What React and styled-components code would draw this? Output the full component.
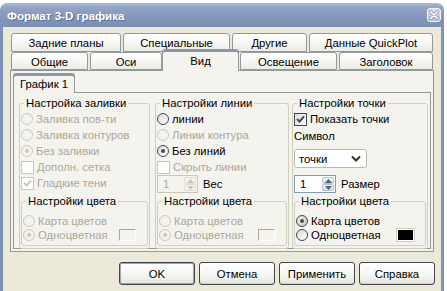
import React from 'react';
import styled, { createGlobalStyle } from 'styled-components';

const GlobalStyle = createGlobalStyle`
  html, body { margin: 0; padding: 0; background: #ffffff; }
  body {
    font-family: "Liberation Sans", Arial, sans-serif;
    font-size: 11.3px;
    color: #000;
    overflow: hidden;
  }
  * { box-sizing: border-box; }
`;

const Window = styled.div`
  width: 444px;
  margin-top: 3px;
  display: flex;
  flex-direction: column;
`;

const TitleBar = styled.div`
  height: 24px;
  border-radius: 7px 7px 0 0;
  background: linear-gradient(#aebcd6 0%, #93a5c6 18%, #8598bd 55%, #7b90b7 100%);
  display: flex;
  align-items: center;
  justify-content: space-between;
  padding: 0 3px 0 7px;
`;

const Title = styled.span`
  color: #ffffff;
  font-weight: bold;
  font-size: 11.6px;
  text-shadow: 1px 1px 0 #5b6c8e;
`;

const CloseButton = styled.div`
  width: 14px;
  height: 14px;
  border: 1px solid #f2f4f8;
  border-radius: 3px;
  background: linear-gradient(#dfe4ee, #b3bdd0);
  display: flex;
  align-items: center;
  justify-content: center;
`;

const Frame = styled.div`
  background: #ece9d8;
  border: 3px solid #7e92b7;
  border-top: none;
  height: 270px;
  display: flex;
  flex-direction: column;
  padding-top: 6px;
`;

const TabStrip = styled.div`
  margin: 0 8px;
  display: flex;
  flex-direction: column;
`;

const TabRow = styled.div`
  display: flex;
  align-items: flex-end;
  height: ${p => p.$h}px;
`;

const Tab = styled.div`
  position: relative;
  width: ${p => p.$w}px;
  margin-left: ${p => p.$ml || 0}px;
  height: ${p => (p.$active ? 22 : p.$h)}px;
  margin-bottom: ${p => (p.$active ? -1 : 0)}px;
  z-index: ${p => (p.$active ? 2 : 1)};
  border: 1px solid #919b9c;
  border-bottom: ${p => (p.$active ? 'none' : '1px solid #919b9c')};
  border-radius: 3px 3px 0 0;
  background: ${p =>
    p.$active ? '#f4f3ee' : 'linear-gradient(#fefefe 0%, #f7f7f4 50%, #ebeae3 100%)'};
  box-shadow: ${p => (p.$active ? 'inset 0 2px 0 #8a95aa' : 'none')};
  display: flex;
  justify-content: center;
  align-items: center;
  padding-top: ${p => (p.$active ? 0 : 1)}px;
  white-space: nowrap;
`;

const Page = styled.div`
  margin: 0 7px;
  height: 182px;
  border: 1px solid #919b9c;
  background: #f4f3ee;
  padding: 2px 2px 0 2px;
  display: flex;
  flex-direction: column;
`;

const InnerTab = styled.div`
  position: relative;
  z-index: 2;
  width: 62px;
  height: 20px;
  margin-bottom: -1px;
  border: 1px solid #919b9c;
  border-bottom: none;
  border-radius: 3px 3px 0 0;
  background: #f4f3ee;
  box-shadow: inset 0 2px 0 #8a95aa;
  display: flex;
  align-items: center;
  justify-content: center;
  padding-top: 1px;
`;

const InnerPanel = styled.div`
  height: 157px;
  border: 1px solid #919b9c;
  background: #f4f3ee;
  display: flex;
  align-items: flex-start;
  padding-top: 3px;
`;

const GroupBox = styled.fieldset`
  margin: ${p => (p.$inner ? 'auto 0 1px 0' : `0 0 0 ${p.$ml || 0}px`)};
  padding: ${p => (p.$inner ? '6px 1px 3px 1px' : '1px 1px 1px 1px')};
  min-width: 0;
  width: ${p => (p.$w ? `${p.$w}px` : 'auto')};
  height: ${p => p.$h}px;
  border: 1px solid #d0d0bf;
  border-radius: 3px;
  display: flex;
  flex-direction: column;
`;

const Legend = styled.legend`
  padding: 0 2px;
  margin-left: 3px;
  line-height: 14px;
  color: #000;
`;

const Row = styled.div`
  display: flex;
  align-items: center;
  height: ${p => p.$h || 16}px;
  margin-top: ${p => p.$mt || 0}px;
  gap: ${p => p.$gap || 3}px;
  color: ${p => (p.$disabled ? '#aca899' : '#000')};
  white-space: nowrap;
`;

const RadioCircle = styled.span`
  width: 12px;
  height: 12px;
  flex: none;
  border-radius: 50%;
  border: 1px solid ${p => (p.$disabled ? '#cac8bb' : '#3b4a5e')};
  background: ${p =>
    p.$disabled
      ? '#f4f3ee'
      : p.$pressed
      ? 'radial-gradient(circle at 40% 40%, #f0f0ee, #c4c3bd)'
      : 'linear-gradient(135deg, #dcdcd6, #ffffff)'};
  display: flex;
  align-items: center;
  justify-content: center;
  &::after {
    content: '';
    width: 4px;
    height: 4px;
    border-radius: 50%;
    display: ${p => (p.$checked ? 'block' : 'none')};
    background: ${p => (p.$disabled ? '#cac8bb' : '#4b4b4b')};
  }
`;

const CheckBox = styled.span`
  width: 13px;
  height: 13px;
  flex: none;
  border: 1px solid ${p => (p.$disabled ? '#cac8bb' : '#3b4a5e')};
  background: ${p => (p.$disabled ? '#ffffff' : 'linear-gradient(135deg, #dcdcd6, #ffffff)')};
  display: flex;
  align-items: center;
  justify-content: center;
`;

const Swatch = styled.span`
  margin-left: auto;
  margin-right: 10px;
  width: 17px;
  height: 12px;
  border: 1px solid ${p => (p.$dark ? '#ffffff' : '#aca899')};
  border-right-color: #ffffff;
  border-bottom-color: #ffffff;
  background: ${p => (p.$dark ? '#000000' : '#f4f3ee')};
  outline: ${p => (p.$dark ? '1px solid #d0d0bf' : 'none')};
`;

const Spin = styled.div`
  width: ${p => p.$w}px;
  height: 18px;
  flex: none;
  display: flex;
  border: 1px solid ${p => (p.$disabled ? '#c9c7ba' : '#7f9db9')};
  background: ${p => (p.$disabled ? '#f4f3ee' : '#ffffff')};
  color: ${p => (p.$disabled ? '#aca899' : '#000')};
`;

const SpinValue = styled.span`
  flex: 1;
  padding-left: 5px;
  display: flex;
  align-items: center;
`;

const SpinButtons = styled.div`
  width: 13px;
  display: flex;
  flex-direction: column;
  padding: 1px 1px 1px 0;
`;

const SpinButton = styled.span`
  flex: 1;
  border: 1px solid ${p => (p.$disabled ? '#e2e0d5' : '#b7c0cc')};
  border-radius: 2px;
  background: ${p => (p.$disabled ? '#f4f3ee' : 'linear-gradient(#f4f6f9, #d6dbe3)')};
  display: flex;
  align-items: center;
  justify-content: center;
`;

const Label = styled.span`
  color: ${p => (p.$disabled ? '#aca899' : '#000')};
`;

const Select = styled.div`
  margin-top: 5px;
  width: 73px;
  height: 19px;
  border: 1px solid #b9b8b1;
  border-radius: 3px;
  background: #ffffff;
  display: flex;
  align-items: center;
  justify-content: space-between;
  padding: 0 5px 0 4px;
`;

const ButtonBar = styled.div`
  display: flex;
  justify-content: flex-end;
  gap: 4px;
  margin: 10px 6px 0 0;
`;

const Button = styled.div`
  width: 76px;
  height: 23px;
  border: 1px solid #3f4650;
  border-radius: 3px;
  background: linear-gradient(#ffffff 0%, #f5f5f2 60%, #e3e2da 100%);
  box-shadow: ${p => (p.$default ? 'inset 0 0 0 1px #9ea6b5' : 'inset 0 -1px 0 #d6d0c5')};
  display: flex;
  align-items: center;
  justify-content: center;
`;

const Arrow = ({ up, color }) => (
  <svg width="7" height="4" viewBox="0 0 7 4">
    <path d={up ? 'M0 4 L3.5 0 L7 4 Z' : 'M0 0 L3.5 4 L7 0 Z'} fill={color} />
  </svg>
);

const Check = ({ color }) => (
  <svg width="9" height="9" viewBox="0 0 9 9">
    <path d="M1 4 L3.5 6.5 L8 1.5" stroke={color} strokeWidth="2" fill="none" />
  </svg>
);

const Radio = ({ label, checked, disabled, pressed }) => (
  <Row $disabled={disabled}>
    <RadioCircle $checked={checked} $disabled={disabled} $pressed={pressed} />
    <span>{label}</span>
  </Row>
);

const Radio14 = ({ label, checked, disabled, pressed, swatch }) => (
  <Row $h={14} $disabled={disabled}>
    <RadioCircle $checked={checked} $disabled={disabled} $pressed={pressed} />
    <span>{label}</span>
    {swatch}
  </Row>
);

const Check16 = ({ label, checked, disabled }) => (
  <Row $disabled={disabled}>
    <CheckBox $disabled={disabled}>
      {checked && <Check color={disabled ? '#cac8bb' : '#4a4a4a'} />}
    </CheckBox>
    <span>{label}</span>
  </Row>
);

const SpinBox = ({ w, disabled, label, mt }) => (
  <Row $h={18} $gap={5} $mt={mt}>
    <Spin $w={w} $disabled={disabled}>
      <SpinValue>1</SpinValue>
      <SpinButtons>
        <SpinButton $disabled={disabled}><Arrow up color={disabled ? '#cac8bb' : '#4d6185'} /></SpinButton>
        <SpinButton $disabled={disabled}><Arrow color={disabled ? '#cac8bb' : '#4d6185'} /></SpinButton>
      </SpinButtons>
    </Spin>
    <Label>{label}</Label>
  </Row>
);

const ColorGroup = ({ disabled, mapChecked, dark }) => (
  <GroupBox $inner $h={52}>
    <Legend>Настройки цвета</Legend>
    <Radio14 label="Карта цветов" disabled={disabled} checked={mapChecked} pressed={!disabled && mapChecked} />
    <Radio14 label="Одноцветная" disabled={disabled} checked={disabled} swatch={<Swatch $dark={dark} />} />
  </GroupBox>
);

const row1 = [
  { t: 'Задние планы', w: 110, ml: 0 },
  { t: 'Специальные', w: 107, ml: 2 },
  { t: 'Другие', w: 75, ml: 2 },
  { t: 'Данные QuickPlot', w: 124, ml: 2 },
];
const row2 = [
  { t: 'Общие', w: 77, ml: 0 },
  { t: 'Оси', w: 72, ml: 2 },
  { t: 'Вид', w: 77, ml: 0, active: true },
  { t: 'Освещение', w: 97, ml: 1 },
  { t: 'Заголовок', w: 94, ml: 2 },
];

export default function App() {
  return (
    <>
      <GlobalStyle />
      <Window>
        <TitleBar>
          <Title>Формат 3-D графика</Title>
          <CloseButton>
            <svg width="10" height="10" viewBox="0 0 10 10">
              <path d="M1.5 1.5 L8.5 8.5 M8.5 1.5 L1.5 8.5" stroke="#8f9ab0" strokeWidth="3.2" strokeLinecap="round" />
              <path d="M1.5 1.5 L8.5 8.5 M8.5 1.5 L1.5 8.5" stroke="#ffffff" strokeWidth="1.6" strokeLinecap="round" />
            </svg>
          </CloseButton>
        </TitleBar>
        <Frame>
          <TabStrip>
            <TabRow $h={19}>
              {row1.map(t => (
                <Tab key={t.t} $w={t.w} $ml={t.ml} $h={19}>{t.t}</Tab>
              ))}
            </TabRow>
            <TabRow $h={18}>
              {row2.map(t => (
                <Tab key={t.t} $w={t.w} $ml={t.ml} $h={18} $active={t.active}>{t.t}</Tab>
              ))}
            </TabRow>
          </TabStrip>
          <Page>
            <InnerTab>График 1</InnerTab>
            <InnerPanel>
              <GroupBox $ml={5} $w={131} $h={153}>
                <Legend>Настройка заливки</Legend>
                <Radio label="Заливка пов-ти" disabled />
                <Radio label="Заливка контуров" disabled />
                <Radio label="Без заливки" disabled checked />
                <Check16 label="Дополн. сетка" disabled />
                <Check16 label="Гладкие тени" disabled checked />
                <ColorGroup disabled />
              </GroupBox>
              <GroupBox $ml={5} $w={134} $h={153}>
                <Legend>Настройки линии</Legend>
                <Radio label="линии" />
                <Radio label="Линии контура" disabled />
                <Radio label="Без линий" checked />
                <Check16 label="Скрыть линии" disabled />
                <SpinBox w={41} disabled label="Вес" />
                <ColorGroup disabled />
              </GroupBox>
              <GroupBox $ml={3} $w={136} $h={153}>
                <Legend>Настройки точки</Legend>
                <Check16 label="Показать точки" checked />
                <Row $mt={1}>Символ</Row>
                <Select>
                  <span>точки</span>
                  <svg width="10" height="7" viewBox="0 0 10 7">
                    <path d="M1 1.5 L5 5.5 L9 1.5" stroke="#333" strokeWidth="2" fill="none" />
                  </svg>
                </Select>
                <SpinBox w={42} label="Размер" mt={7} />
                <ColorGroup mapChecked dark />
              </GroupBox>
            </InnerPanel>
          </Page>
          <ButtonBar>
            <Button $default>OK</Button>
            <Button>Отмена</Button>
            <Button>Применить</Button>
            <Button>Справка</Button>
          </ButtonBar>
        </Frame>
      </Window>
    </>
  );
}
